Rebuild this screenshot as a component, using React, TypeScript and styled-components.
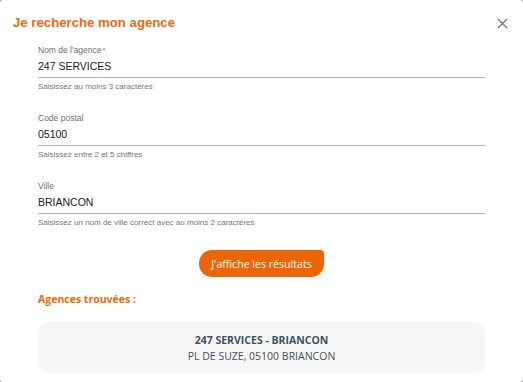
import React from 'react';
import styled, {createGlobalStyle} from "styled-components";

const GlobalStyle = createGlobalStyle`
  html, body {
    margin: 0;
    padding: 0;
    background: #9a9a9a;
  }
  * { box-sizing: border-box; }
`

interface PropsTypeField {
  label: string;
  required?: boolean;
  value: string;
  hint: string;
}

const Field = ({label, required, value, hint}: PropsTypeField) => (
  <FieldBox>
    <FieldLabel>{label}{required && <Star>*</Star>}</FieldLabel>
    <FieldValue>{value}</FieldValue>
    <FieldHint>{hint}</FieldHint>
  </FieldBox>
)

const App = () => {
  return (
    <>
      <GlobalStyle/>
      <Modal>
        <ModalHeader>
          <ModalTitle>Je recherche mon agence</ModalTitle>
          <CloseButton aria-label="Fermer">
            <svg width="11" height="11" viewBox="0 0 11 11">
              <path d="M1 1 L10 10 M10 1 L1 10" stroke="#777" strokeWidth="1.3" fill="none"/>
            </svg>
          </CloseButton>
        </ModalHeader>
        <ModalBody>
          <Field label="Nom de l'agence" required value="247 SERVICES" hint="Saisissez au moins 3 caractères"/>
          <Field label="Code postal" value="05100" hint="Saisissez entre 2 et 5 chiffres"/>
          <Field label="Ville" value="BRIANCON" hint="Saisissez un nom de ville correct avec au moins 2 caractères"/>
          <ButtonRow>
            <SubmitButton>J'affiche les résultats</SubmitButton>
          </ButtonRow>
          <ResultsTitle>Agences trouvées :</ResultsTitle>
          <AgencyCard>
            <AgencyName>247 SERVICES - BRIANCON</AgencyName>
            <AgencyAddress>PL DE SUZE, 05100 BRIANCON</AgencyAddress>
          </AgencyCard>
        </ModalBody>
      </Modal>
    </>
  );
};

const Modal = styled.div`
  width: 523px;
  height: 382px;
  background: #fff;
  border-radius: 3px;
  overflow: hidden;
  font-family: "Liberation Sans", Arial, sans-serif;
`
const ModalHeader = styled.div`
  display: flex;
  align-items: center;
  justify-content: space-between;
  padding: 12px 15px 0 13px;
  height: 33px;
`
const ModalTitle = styled.h1`
  margin: 0;
  font-size: 13.2px;
  font-weight: 700;
  color: #f0690f;
`
const CloseButton = styled.button`
  border: 0;
  background: none;
  padding: 0;
  display: flex;
  cursor: pointer;
  margin-top: 1px;
`
const ModalBody = styled.div`
  padding: 11.5px 38px 0 38px;
  display: flex;
  flex-direction: column;
`
const FieldBox = styled.div`
  display: flex;
  flex-direction: column;
  height: 68px;
`
const FieldLabel = styled.label`
  font-size: 8.5px;
  color: #6f6f6f;
  line-height: 11px;
`
const Star = styled.span`
  font-size: 7px;
  vertical-align: top;
  margin-left: 1px;
`
const FieldValue = styled.div`
  font-size: 10.5px;
  color: #222;
  line-height: 16px;
  padding: 2px 0 3px;
  border-bottom: 1px solid #b5b5b5;
`
const FieldHint = styled.div`
  font-size: 8px;
  color: #777;
  line-height: 11px;
  margin-top: 3px;
`
const ButtonRow = styled.div`
  display: flex;
  justify-content: center;
  margin-top: 1.5px;
`
const SubmitButton = styled.button`
  width: 125px;
  height: 27px;
  border: 0;
  border-radius: 13px 4px 13px 13px;
  background: #ec6608;
  color: #fff;
  font-family: "Open Sans", sans-serif;
  font-size: 10.6px;
  padding: 0;
  cursor: pointer;
`
const ResultsTitle = styled.h2`
  margin: 13.5px 0 0;
  font-family: "Open Sans", sans-serif;
  font-size: 10.5px;
  font-weight: 700;
  color: #f0690f;
  line-height: 17px;
`
const AgencyCard = styled.div`
  margin-top: 14.5px;
  height: 51px;
  background: #f6f6f6;
  border-radius: 10px;
  display: flex;
  flex-direction: column;
  align-items: center;
  justify-content: center;
  font-family: "Open Sans", sans-serif;
  color: #44525e;
  font-size: 10.5px;
  line-height: 16px;
`
const AgencyName = styled.div`
  font-weight: 700;
`
const AgencyAddress = styled.div``

export default App;
